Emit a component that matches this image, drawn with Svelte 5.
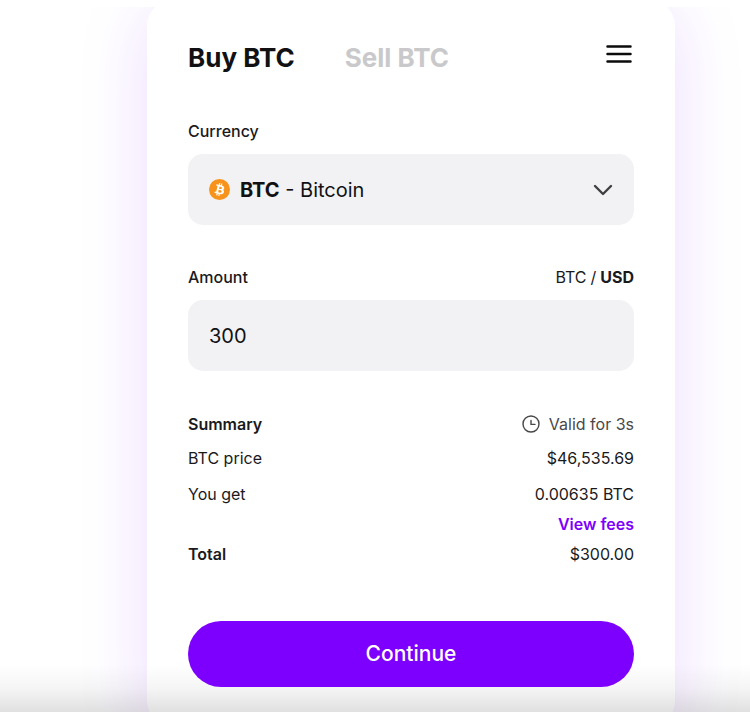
<script lang="ts">
	const currencies = [
		{ code: 'BTC', name: 'Bitcoin' }
	];

	let mode: 'buy' | 'sell' = $state('buy');
	let currency = $state('BTC');
	let unit: 'BTC' | 'USD' = $state('USD');
	let amount = $state('300');

	const selected = $derived(currencies.find((c) => c.code === currency) ?? currencies[0]);
</script>

<main class="page">
	<form class="card" onsubmit={(e) => e.preventDefault()}>
		<header class="header">
			<div class="tabs">
				<button type="button" class="tab" class:active={mode === 'buy'} aria-pressed={mode === 'buy'} onclick={() => (mode = 'buy')}>Buy BTC</button>
				<button type="button" class="tab" class:active={mode === 'sell'} aria-pressed={mode === 'sell'} onclick={() => (mode = 'sell')}>Sell BTC</button>
			</div>
			<button type="button" class="menu" aria-label="Menu">
				<svg width="26" height="20" viewBox="0 0 26 20" fill="none" stroke="#0b0b0c" stroke-width="2.5" stroke-linecap="round">
					<path d="M1.5 2.4h23M1.5 10h23M1.5 17.6h23" />
				</svg>
			</button>
		</header>

		<div class="label-row">
			<label class="label" for="currency">Currency</label>
		</div>
		<div class="field select-field">
			<svg class="coin" width="21" height="21" viewBox="0 0 32 32" aria-hidden="true">
				<circle cx="16" cy="16" r="16" fill="#f7931a" />
				<path
					fill="#fff"
					d="M23.189 14.02c.314-2.096-1.283-3.223-3.465-3.975l.708-2.84-1.728-.43-.69 2.765c-.454-.114-.92-.22-1.385-.326l.695-2.783L15.596 6l-.708 2.839c-.376-.086-.746-.17-1.104-.26l.002-.009-2.384-.595-.46 1.846s1.283.294 1.256.312c.7.175.826.638.805 1.006l-.806 3.235c.048.012.11.03.18.057l-.183-.045-1.13 4.532c-.086.212-.303.531-.793.41.018.025-1.256-.313-1.256-.313l-.858 1.978 2.25.561c.418.105.828.215 1.231.318l-.715 2.872 1.727.43.708-2.84c.472.127.93.245 1.378.357l-.706 2.828 1.728.43.715-2.866c2.948.558 5.164.333 6.097-2.333.752-2.146-.037-3.385-1.588-4.192 1.13-.26 1.98-1.003 2.207-2.538zm-3.95 5.538c-.533 2.147-4.148.986-5.32.695l.95-3.805c1.172.293 4.929.872 4.37 3.11zm.535-5.569c-.487 1.953-3.495.96-4.47.717l.86-3.45c.975.243 4.118.696 3.61 2.733z"
				/>
			</svg>
			<span class="coin-name" aria-hidden="true"><b>{selected.code}</b> - {selected.name}</span>
			<svg class="chevron" width="20" height="12" viewBox="0 0 20 12" fill="none" stroke="#404042" stroke-width="2.4" stroke-linecap="round" stroke-linejoin="round" aria-hidden="true">
				<path d="M2 2l8 8 8-8" />
			</svg>
			<select id="currency" bind:value={currency}>
				{#each currencies as c}
					<option value={c.code}>{c.code} - {c.name}</option>
				{/each}
			</select>
		</div>

		<div class="label-row">
			<label class="label" for="amount">Amount</label>
			<div class="units">
				<button type="button" class:active={unit === 'BTC'} onclick={() => (unit = 'BTC')}>BTC</button>
				<span>/</span>
				<button type="button" class:active={unit === 'USD'} onclick={() => (unit = 'USD')}>USD</button>
			</div>
		</div>
		<input id="amount" class="field" type="text" inputmode="decimal" bind:value={amount} />

		<section class="summary">
			<div class="row heading">
				<h2>Summary</h2>
				<span class="valid">
					<svg width="18" height="18" viewBox="0 0 18 18" fill="none" stroke="#48484a" stroke-width="1.4" stroke-linecap="round" stroke-linejoin="round" aria-hidden="true">
						<circle cx="9" cy="9" r="8" />
						<path d="M9 5.4V9.4h4" />
					</svg>
					Valid for 3s
				</span>
			</div>
			<div class="row">
				<span>BTC price</span>
				<span>$46,535.69</span>
			</div>
			<div class="row">
				<span>You get</span>
				<span>0.00635 BTC</span>
			</div>
			<div class="row fees">
				<a href="#fees">View fees</a>
			</div>
			<div class="row total">
				<b>Total</b>
				<span>$300.00</span>
			</div>
		</section>

		<button type="submit" class="continue">Continue</button>
	</form>
	<div class="fade"></div>
</main>

<style>
	:global(body) {
		margin: 0;
		background: #fff;
	}

	.page {
		position: relative;
		box-sizing: border-box;
		height: 100vh;
		overflow: hidden;
		border-top: 7px solid #fff;
		padding-left: 72px;
		font-family: Inter, 'Liberation Sans', sans-serif;
		font-size: 16px;
		line-height: 20px;
		color: #1a1a1c;
	}

	button {
		padding: 0;
		border: 0;
		background: none;
		font: inherit;
		color: inherit;
		cursor: pointer;
	}

	.card {
		box-sizing: border-box;
		max-width: 528px;
		margin: -7px auto 0;
		padding: 40px 41px;
		border-radius: 26px;
		background: #fff;
		box-shadow: 0 8px 72px rgba(128, 0, 255, 0.14);
	}

	/* Header */
	.header {
		display: flex;
		align-items: flex-start;
		justify-content: space-between;
		margin-bottom: 45px;
	}
	.tabs {
		display: flex;
		gap: 50px;
	}
	.tab {
		font-size: 26px;
		line-height: 36px;
		font-weight: 700;
		color: #c9c9cb;
	}
	.tab.active {
		color: #111113;
	}
	.menu {
		display: flex;
		padding: 4px 2px;
	}

	/* Fields */
	.label-row {
		display: flex;
		align-items: center;
		justify-content: space-between;
		margin-bottom: 13px;
	}
	.label {
		font-weight: 500;
	}
	.units {
		display: flex;
		gap: 4px;
	}
	.units .active {
		font-weight: 700;
	}
	.field {
		box-sizing: border-box;
		width: 100%;
		height: 71px;
		margin: 0 0 42px;
		padding: 0 21px;
		border: 0;
		border-radius: 15px;
		background: #f2f2f4;
		font: 400 20px/28px Inter, 'Liberation Sans', sans-serif;
		color: #111113;
	}
	.select-field {
		position: relative;
		display: flex;
		align-items: center;
	}
	.coin {
		margin-right: 10px;
	}
	.chevron {
		margin-left: auto;
	}
	.select-field select {
		position: absolute;
		inset: 0;
		width: 100%;
		opacity: 0;
		font: inherit;
		cursor: pointer;
	}
	.select-field:focus-within {
		outline: 2px solid #7d00ff;
	}

	/* Summary */
	.summary {
		margin-bottom: 49px;
	}
	.row {
		display: flex;
		align-items: center;
		justify-content: space-between;
		line-height: 36px;
	}
	.heading {
		line-height: 22px;
		margin-bottom: 5px;
	}
	h2 {
		margin: 0;
		font-size: 16px;
		font-weight: 600;
	}
	.valid {
		display: flex;
		align-items: center;
		gap: 9px;
		color: #48484a;
	}
	.fees {
		justify-content: flex-end;
		line-height: 24px;
	}
	.fees a {
		font-weight: 600;
		color: #7d00ff;
		text-decoration: none;
	}
	.total b {
		font-weight: 600;
	}

	.continue {
		position: relative;
		z-index: 1;
		display: block;
		width: 100%;
		height: 66px;
		border-radius: 33px;
		background: #7d00ff;
		font-size: 21px;
		font-weight: 500;
		color: #fff;
	}

	/* Soft shade along the bottom edge of the window */
	.fade {
		position: absolute;
		left: 0;
		right: 0;
		bottom: 0;
		height: 48px;
		background: linear-gradient(rgba(0, 0, 0, 0), rgba(0, 0, 0, 0.04) 50%, rgba(0, 0, 0, 0.12));
		pointer-events: none;
	}
</style>
